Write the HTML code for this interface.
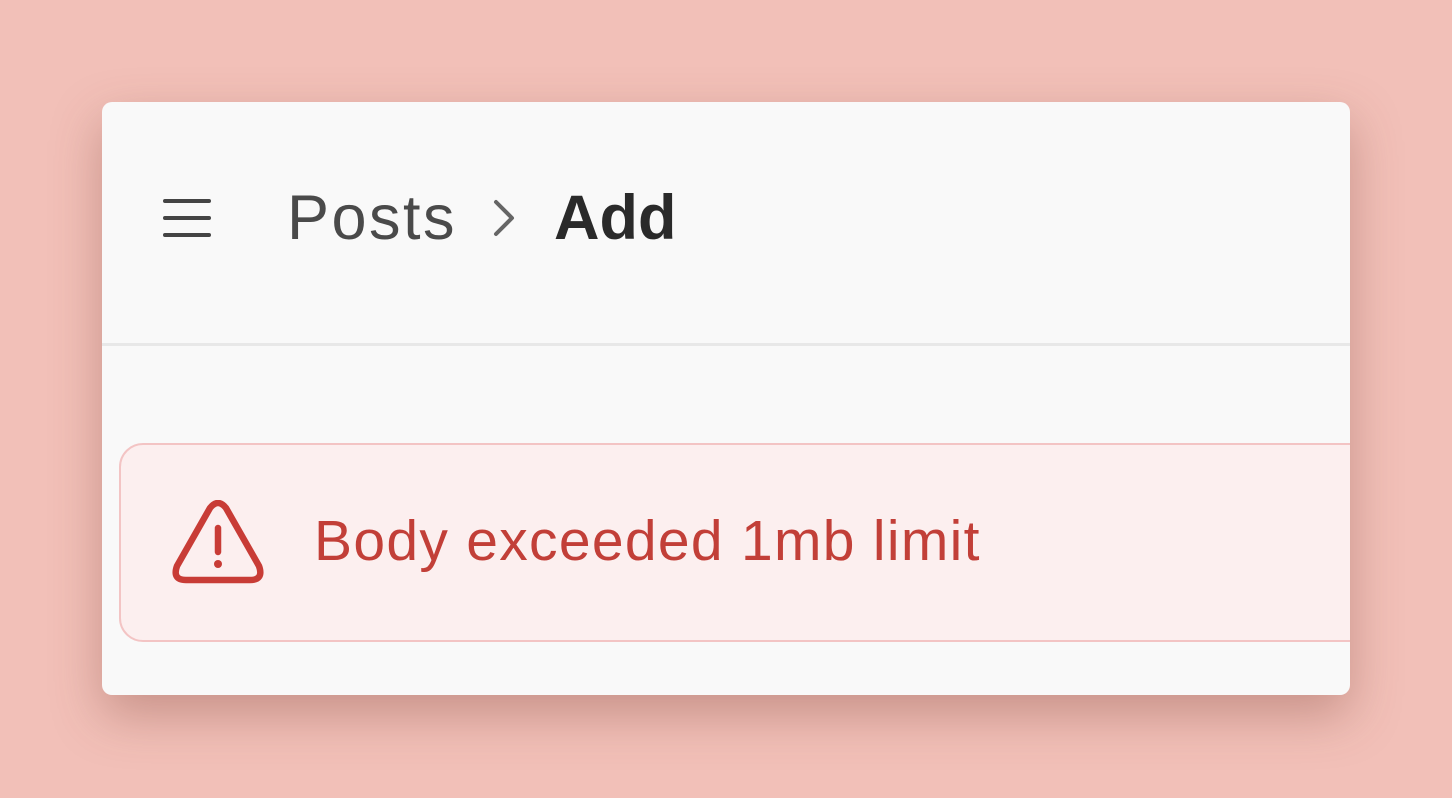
<!DOCTYPE html>
<html><head><style>
html,body{margin:0;padding:0}
body{width:1452px;height:798px;background:#f2c0b8;position:relative;overflow:hidden;font-family:"Liberation Sans",sans-serif}
.card{position:absolute;left:102px;top:102px;width:1248px;height:593px;background:#f9f9f9;border-radius:10px;overflow:hidden;box-shadow:0 20px 50px rgba(120,60,50,.35)}
.div{position:absolute;left:0;right:0;top:241px;height:3px;background:#e8e8e8}
.t{position:absolute;white-space:nowrap;line-height:1}
.alert{position:absolute;left:17px;top:341px;width:1300px;height:195px;border:2px solid #f3c4c4;background:#fcefef;border-radius:24px}
</style></head><body>
<div class="card">
<svg style="position:absolute;left:60px;top:95px" width="52" height="44" viewBox="0 0 52 44"><g stroke="#444" stroke-width="4" stroke-linecap="round"><line x1="3" y1="4" x2="47" y2="4"/><line x1="3" y1="21" x2="47" y2="21"/><line x1="3" y1="38" x2="47" y2="38"/></g></svg>
<div class="t" style="left:185px;top:85px;font-size:63px;letter-spacing:2.5px;color:#4a4a4a">Posts</div>
<svg style="position:absolute;left:388px;top:95px" width="30" height="44" viewBox="0 0 30 44"><polyline points="6,5 22,21 6,37" fill="none" stroke="#666" stroke-width="4" stroke-linecap="round" stroke-linejoin="round"/></svg>
<div class="t" style="left:452px;top:85px;font-size:63px;font-weight:bold;color:#2a2a2a">Add</div>
<div class="div"></div>
<div class="alert"></div>
<svg style="position:absolute;left:70px;top:398px" width="92" height="84" viewBox="0 0 92 84"><path d="M38 8 Q46 -2 54 8 L87 66 Q92 80 78 80 L14 80 Q0 80 5 66 Z" fill="none" stroke="#c83c36" stroke-width="6.5" stroke-linejoin="round"/><line x1="46" y1="28" x2="46" y2="52" stroke="#c83c36" stroke-width="6.5" stroke-linecap="round"/><circle cx="46" cy="64" r="4" fill="#c83c36"/></svg>
<div class="t" style="left:212px;top:411px;font-size:57px;letter-spacing:1.3px;color:#c23f38">Body exceeded 1mb limit</div>
</div>
</body></html>
